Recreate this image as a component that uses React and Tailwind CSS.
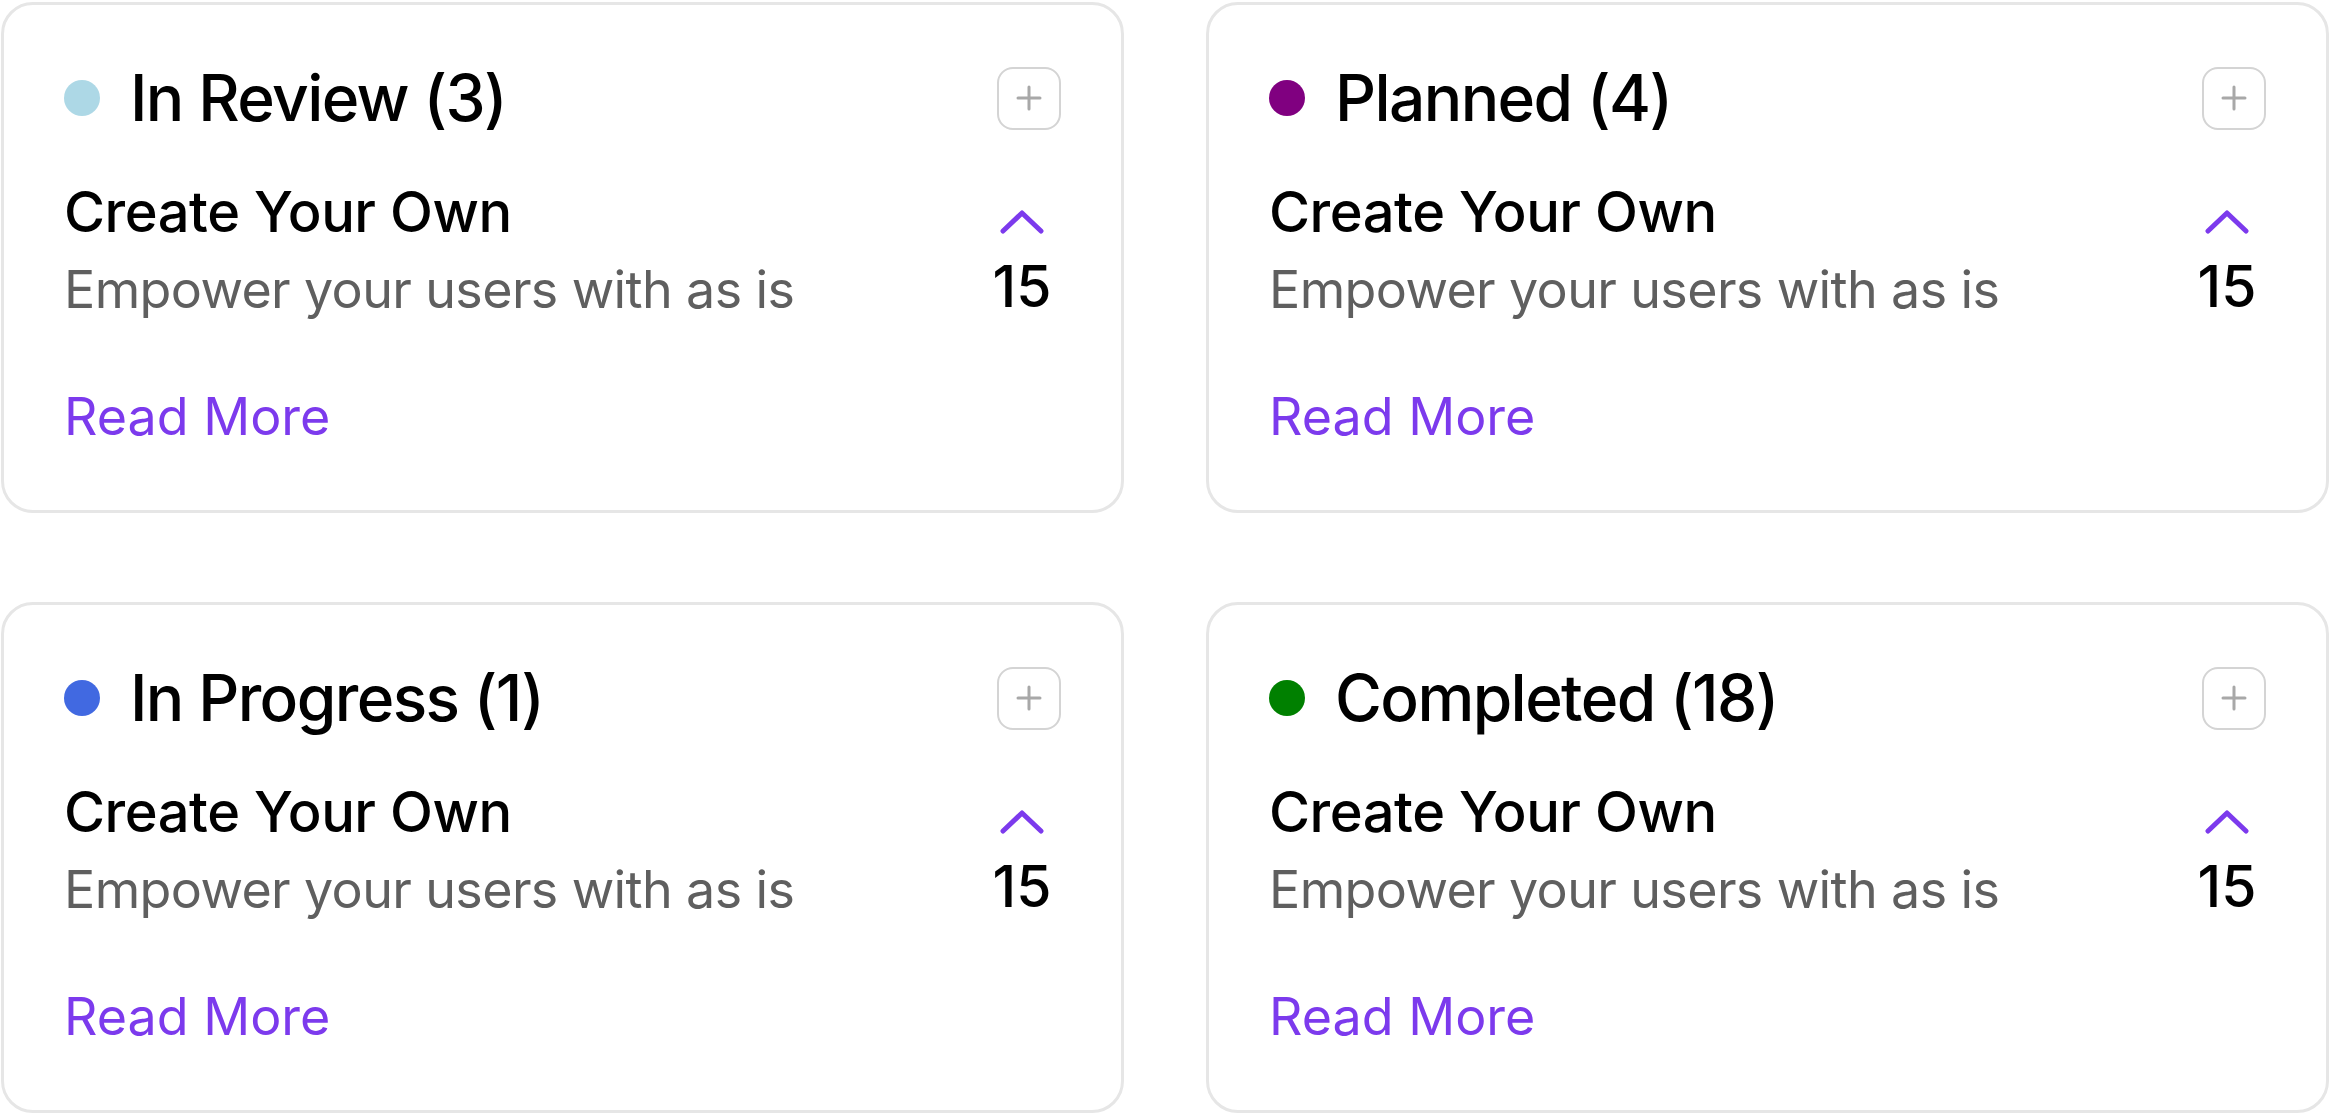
import React from "react";

const columns = [
  { title: "In Review", count: 3, dot: "bg-[#add8e6]" },
  { title: "Planned", count: 4, dot: "bg-[#800080]" },
  { title: "In Progress", count: 1, dot: "bg-[#4169e1]" },
  { title: "Completed", count: 18, dot: "bg-[#008000]" },
];

function PlusButton() {
  return (
    <button className="w-[64px] h-[63px] rounded-[16px] border-[2.5px] border-[#d4d4d4] flex items-center justify-center">
      <svg width="26" height="26" viewBox="0 0 26 26" fill="none" stroke="#a8a8a8" strokeWidth="3" strokeLinecap="round">
        <path d="M13 2 V24 M2 13 H24" />
      </svg>
    </button>
  );
}

function Card({ title, count, dot }) {
  return (
    <div className="bg-white border-[3px] border-[#e6e6e6] rounded-[32px] px-[60px] pt-[61px] pb-[63px]">
      {/* Header */}
      <div className="flex items-center justify-between h-[64px]">
        <div className="flex items-center gap-[30px]">
          <span className={`w-[36px] h-[36px] rounded-full ${dot}`}></span>
          <h2 className="text-[64px] leading-none font-medium tracking-[-0.025em] text-black">
            {title} ({count})
          </h2>
        </div>
        <PlusButton />
      </div>

      {/* Item */}
      <div className="flex items-start justify-between mt-[49px]">
        <div>
          <h3 className="text-[56px] leading-[67px] font-medium tracking-[-0.008em] text-black">Create Your Own</h3>
          <p className="text-[52px] leading-[63px] mt-[12px] tracking-[-0.012em] text-[#5f5f5f]">Empower your users with as is</p>
        </div>
        <div className="w-[78px] flex flex-col items-center pt-[31px]">
          <svg width="44" height="24" viewBox="0 0 44 24" fill="none" stroke="#7c3aed" strokeWidth="5" strokeLinecap="round" strokeLinejoin="round">
            <path d="M3 21 L22 3 L41 21" />
          </svg>
          <span className="text-[57px] leading-[66px] mt-[20px] font-medium text-black">15</span>
        </div>
      </div>

      <a href="#" className="block text-[52px] leading-[60px] mt-[66px] text-[#7c3aed]">
        Read More
      </a>
    </div>
  );
}

export default function App() {
  return (
    <div className="bg-white min-h-screen px-[1px] py-[2px] font-['Inter',sans-serif]">
      <div className="grid grid-cols-2 gap-x-[82px] gap-y-[89px]">
        {columns.map(col => (
          <Card key={col.title} {...col} />
        ))}
      </div>
    </div>
  );
}
